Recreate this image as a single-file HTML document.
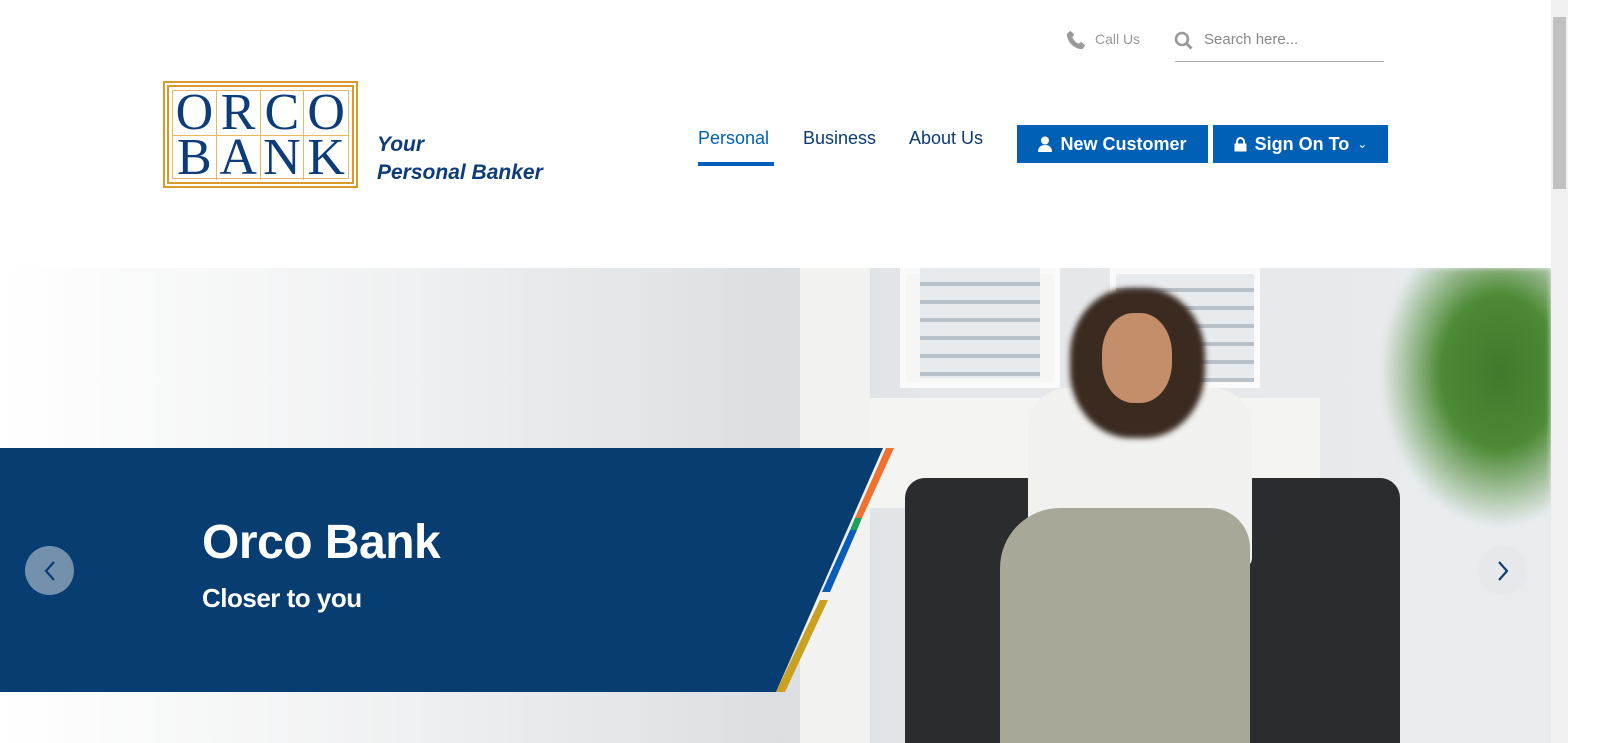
<!DOCTYPE html>
<html><head><meta charset="utf-8"><style>
*{margin:0;padding:0;box-sizing:border-box}
body{width:1600px;height:743px;overflow:hidden;background:#fff;font-family:"Liberation Sans",sans-serif;position:relative}
.abs{position:absolute}
.nav{font-size:18px;color:#0b3c74;top:128px}
.btn{background:#0060b5;color:#fff;font-weight:bold;font-size:18px;height:38px;top:125px;display:flex;align-items:center;justify-content:center;gap:8px}
.ph{filter:blur(3px)}
</style></head><body>
<svg class="abs" style="left:1065px;top:29px" width="22" height="22" viewBox="0 0 24 24"><path d="M6 2l4 4-2 3c1 3 4 6 7 7l3-2 4 4-3 4C10 22 2 14 2 5z" fill="#9a9a9a"/></svg>
<div class="abs" style="left:1095px;top:31px;font-size:14px;color:#999">Call Us</div>
<svg class="abs" style="left:1174px;top:31px" width="20" height="20" viewBox="0 0 20 20"><circle cx="8" cy="8" r="6" fill="none" stroke="#999" stroke-width="2.6"/><path d="M12.5 12.5l5 5" stroke="#999" stroke-width="3"/></svg>
<div class="abs" style="left:1204px;top:31px;font-size:15px;color:#888">Search here...</div>
<div class="abs" style="left:1175px;top:61px;width:209px;height:1px;background:#aaa"></div>
<div class="abs" style="left:163px;top:81px;width:195px;height:107px;border:2px solid #d99a2b;padding:2px">
 <div style="width:100%;height:100%;border:2px solid #d99a2b;padding:3px">
  <div style="width:100%;height:100%;border:1px solid #e8b860;display:grid;grid-template-columns:repeat(4,1fr);grid-template-rows:1fr 1fr;font-family:'Liberation Serif',serif;color:#0d3c7a;font-size:52px;line-height:44px;text-align:center">
   <div style="border-right:1px solid #e8b860;border-bottom:1px solid #e8b860">O</div><div style="border-right:1px solid #e8b860;border-bottom:1px solid #e8b860">R</div><div style="border-right:1px solid #e8b860;border-bottom:1px solid #e8b860">C</div><div style="border-bottom:1px solid #e8b860">O</div>
   <div style="border-right:1px solid #e8b860">B</div><div style="border-right:1px solid #e8b860">A</div><div style="border-right:1px solid #e8b860">N</div><div>K</div>
  </div></div></div>
<div class="abs" style="left:377px;top:131px;font-size:21px;font-weight:bold;font-style:italic;color:#0d3c7a;line-height:28px">Your<br>Personal Banker</div>
<div class="abs nav" style="left:698px;color:#0060b5">Personal</div>
<div class="abs" style="left:698px;top:162px;width:76px;height:4px;background:#0060b5"></div>
<div class="abs nav" style="left:803px">Business</div>
<div class="abs nav" style="left:909px">About Us</div>
<div class="abs btn" style="left:1017px;width:191px"><svg width="14" height="16" viewBox="0 0 14 16"><circle cx="7" cy="4.5" r="4" fill="#fff"/><path d="M0 16c0-5 3-7 7-7s7 2 7 7z" fill="#fff"/></svg>New Customer</div>
<div class="abs btn" style="left:1213px;width:175px"><svg width="13" height="15" viewBox="0 0 13 15"><path d="M3 7V4.5a3.5 3.5 0 017 0V7" fill="none" stroke="#fff" stroke-width="2"/><rect x="0.5" y="6.5" width="12" height="8" fill="#fff"/></svg>Sign On To <span style="font-size:12px;font-weight:normal">&#8964;</span></div>
<div class="abs" style="left:0;top:268px;width:1551px;height:475px;background:linear-gradient(90deg,#fff 0%,#f0f1f2 25%,#dcdfe2 50%,#e4e6e8 60%,#e9ebed 100%);overflow:hidden">
 <div class="abs" style="left:800px;top:0;width:70px;height:475px;background:#f2f2f0"></div>
 <div class="abs" style="left:900px;top:0;width:160px;height:120px;background:#f6f6f4;border:6px solid #fafafa"></div>
 <div class="abs" style="left:920px;top:0;width:120px;height:110px;background:repeating-linear-gradient(180deg,#e8ebee 0 14px,#b8c0c8 14px 18px)"></div>
 <div class="abs" style="left:1110px;top:0;width:150px;height:120px;background:repeating-linear-gradient(180deg,#e8ebee 0 14px,#b8c0c8 14px 18px);border:6px solid #fafafa"></div>
 <div class="abs" style="left:870px;top:130px;width:450px;height:110px;background:#f4f4f2"></div>
 <div class="abs" style="left:1400px;top:0;width:151px;height:475px;background:#e8ecef"></div>
 <div class="abs ph" style="left:1380px;top:0;width:171px;height:260px;background:radial-gradient(ellipse at 70% 40%,#3f7a2c 0%,#4d8a35 35%,rgba(80,140,60,0) 70%)"></div>
 <div class="abs" style="left:905px;top:210px;width:495px;height:265px;background:#2a2c2e;border-radius:20px 20px 0 0"></div>
 <div class="abs" style="left:1028px;top:120px;width:224px;height:180px;background:#f1f1ef;border-radius:40px 40px 10px 10px"></div>
 <div class="abs ph" style="left:1070px;top:20px;width:135px;height:150px;background:#3a2a20;border-radius:45%"></div>
 <div class="abs" style="left:1102px;top:45px;width:70px;height:90px;background:#c48e6a;border-radius:45%"></div>
 <div class="abs" style="left:1000px;top:240px;width:250px;height:235px;background:#a8a898;border-radius:60px 40px 0 0"></div>
</div>
<svg class="abs" style="left:0;top:448px" width="900" height="245" viewBox="0 0 900 245">
 <polygon points="0,0 883,0 776,244 0,244" fill="#083d71"/>
 <polygon points="886,0 894,0 862,70 855,70" fill="#f07030"/>
 <polygon points="855,70 862,70 857,82 850,82" fill="#1aa05a"/>
 <polygon points="850,82 857,82 830,144 822,144" fill="#0a5cb8"/>
 <polygon points="820,152 828,152 785,244 776,244" fill="#c9a020"/>
</svg>
<div class="abs" style="left:202px;top:515px;font-size:48px;font-weight:bold;color:#fff;letter-spacing:-0.5px">Orco Bank</div>
<div class="abs" style="left:202px;top:583px;font-size:26px;font-weight:bold;color:#fff;letter-spacing:-0.5px">Closer to you</div>
<div class="abs" style="left:25px;top:546px;width:49px;height:49px;border-radius:50%;background:#7390ad;display:flex;align-items:center;justify-content:center"><svg width="14" height="22" viewBox="0 0 14 22"><path d="M11 2L3 11l8 9" fill="none" stroke="#0b3c74" stroke-width="2.2"/></svg></div>
<div class="abs" style="left:1478px;top:546px;width:49px;height:49px;border-radius:50%;background:rgba(230,232,235,.85);display:flex;align-items:center;justify-content:center"><svg width="14" height="22" viewBox="0 0 14 22"><path d="M3 2l8 9-8 9" fill="none" stroke="#0b3c74" stroke-width="2.2"/></svg></div>
<div class="abs" style="left:1551px;top:0;width:17px;height:743px;background:#f1f1f1"></div>
<div class="abs" style="left:1553px;top:17px;width:13px;height:172px;background:#c1c1c1"></div>
<div class="abs" style="left:1568px;top:0;width:32px;height:743px;background:#fff"></div>
</body></html>
